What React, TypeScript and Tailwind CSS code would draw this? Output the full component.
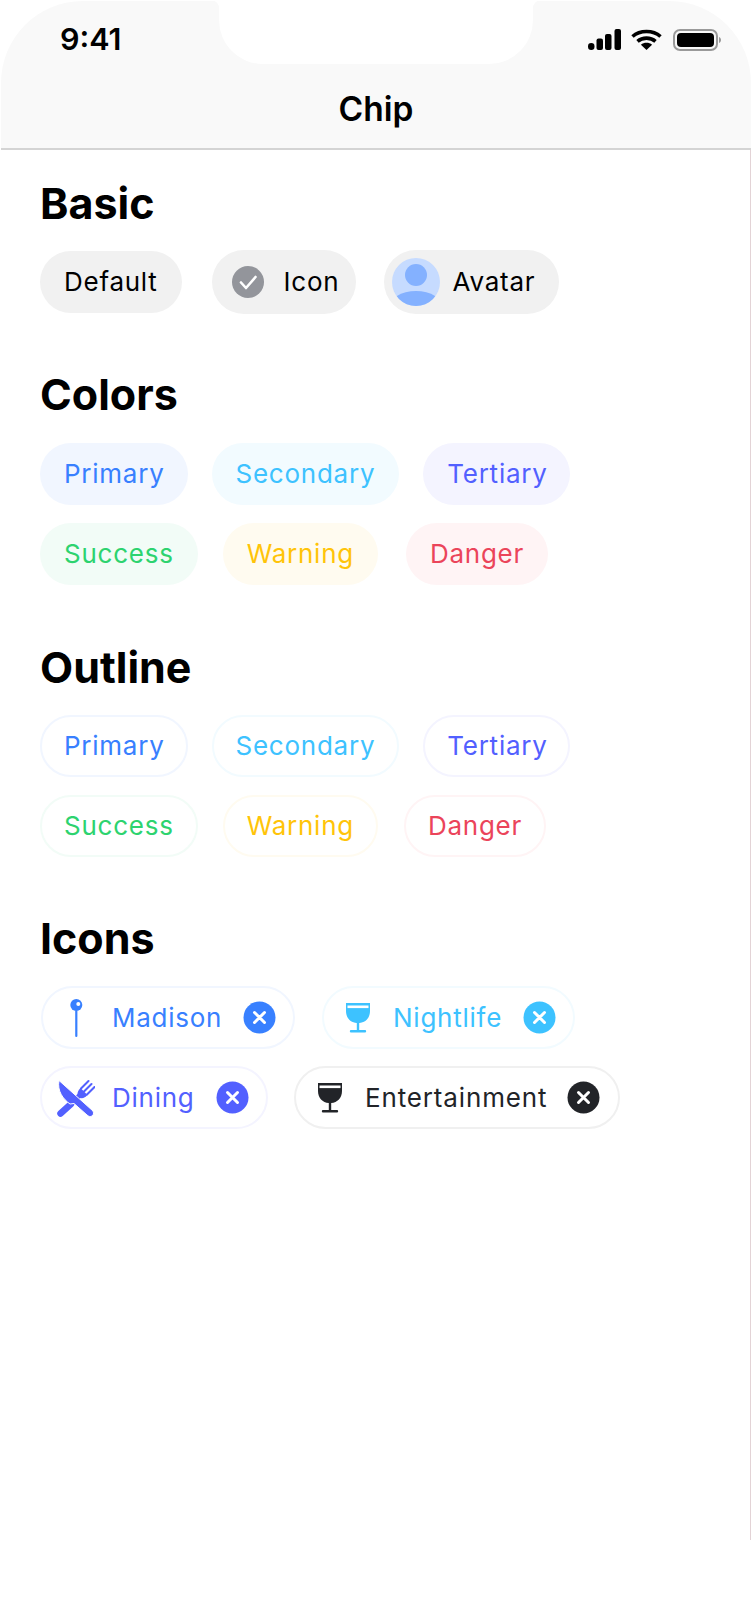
import React from "react";

const Chip = ({ label, cls, ml = "" }: { label: string; cls: string; ml?: string }) => (
  <div className={`flex h-[62px] items-center rounded-full pb-[2px] text-[26px] tracking-[0.75px] ${cls} ${ml}`}>{label}</div>
);

const Close = ({ color }: { color: string }) => (
  <svg width="33" height="33" viewBox="0 0 33 33" className="shrink-0">
    <circle cx="16.5" cy="16.500" r="16" fill={color} />
    <path d="M11.500 11.500l10 10M21.500 11.500l-10 10" stroke="#fff" strokeWidth="3" strokeLinecap="round" />
  </svg>
);

const Glass = ({ color }: { color: string }) => (
  <svg width="26" height="31" viewBox="0 0 26 31" className="shrink-0">
    <path d="M1 1h24v8c0 7-4.500 11.500-10.800 12V28H20a1.200 1.200 0 010 2.400H6A1.200 1.200 0 016 28h5.800v-7C5.500 20.500 1 16 1 9z" fill={color} />
    <rect x="2.500" y="3.500" width="21" height="2.600" fill="#fff" />
  </svg>
);

const Heading = ({ children, cls = "" }: { children: React.ReactNode; cls?: string }) => (
  <h2 className={`h-10 text-[43px] leading-10 font-bold text-black ${cls}`}>{children}</h2>
);

export default function App() {
  return (
    <div className="relative h-[1623px] w-[751px] overflow-hidden bg-white font-['Inter',sans-serif]">
      <div className="absolute top-[83px] right-0 h-[1457px] w-px bg-[#e3d3d6]" />

      <header className="relative mt-px ml-px h-[149px] rounded-tl-[82px] rounded-tr-[82px] border-b-2 border-[#d4d4d4] bg-[#f9f9f9]">
        <div className="absolute top-[-1px] left-[218px] h-[64px] w-[314px] rounded-b-[44px] bg-white" />
        <div className="absolute top-[-1px] left-[209px] size-[9px] bg-[radial-gradient(circle_at_0_100%,transparent_9px,white_9.5px)]" />
        <div className="absolute top-[-1px] left-[532px] size-[9px] bg-[radial-gradient(circle_at_100%_100%,transparent_9px,white_9.5px)]" />

        <span className="absolute top-[20px] left-[59px] text-[30.5px] leading-9 font-semibold text-black">9:41</span>

        <div className="absolute top-[28px] left-[587px] flex items-start">
          <svg width="33" height="21" viewBox="0 0 33 21" className="shrink-0">
            <rect x="0" y="14" width="6.500" height="7" rx="3.250" fill="#000" />
            <rect x="8.500" y="9.500" width="6.500" height="11.500" rx="2" fill="#000" />
            <rect x="17" y="5" width="6.500" height="16" rx="2" fill="#000" />
            <rect x="26.500" y="0" width="6.500" height="21" rx="2" fill="#000" />
          </svg>
          <svg width="31" height="21" viewBox="0 0 31 21" className="ml-[10px] shrink-0">
            <path d="M1.500 7.500C9 .8 22 .8 29.500 7.500" stroke="#000" strokeWidth="3.600" fill="none" />
            <path d="M6.500 12.300c5-4.300 13-4.300 18 0" stroke="#000" strokeWidth="3.600" fill="none" />
            <path d="M15.500 21l-5.600-5.300c3.200-2.600 8-2.600 11.200 0z" fill="#000" />
          </svg>
          <svg width="48" height="22" viewBox="0 0 48 22" className="ml-[11px] shrink-0">
            <rect x="1" y="1" width="43" height="20" rx="6" fill="none" stroke="#9a9a9a" strokeWidth="2" />
            <rect x="4" y="4" width="37" height="14" rx="4" fill="#000" />
            <path d="M46 8c1.400.5 2 1.700 2 3s-.6 2.500-2 3z" fill="#9a9a9a" />
          </svg>
        </div>

        <h1 className="absolute top-[88px] left-0 w-full text-center text-[33.5px] leading-10 font-semibold text-black">Chip</h1>
      </header>

      <main className="pt-[33px] pl-10">
        <Heading>Basic</Heading>
        <div className="mt-[27px] flex h-16 items-center">
          <Chip label="Default" cls="px-6 bg-[#f1f1f1] text-black" />
          <div className="ml-[30px] flex h-16 w-[144px] items-center rounded-full bg-[#f1f1f1] pl-5 text-[26px] tracking-[0.75px] text-black">
            <svg width="32" height="32" viewBox="0 0 32 32" className="shrink-0">
              <circle cx="16" cy="16" r="16" fill="#93959b" />
              <path d="M9 16.500l5 5.500 9.500-11" stroke="#fff" strokeWidth="2.600" fill="none" strokeLinecap="round" strokeLinejoin="round" />
            </svg>
            <span className="ml-5 pb-[2px]">Icon</span>
          </div>
          <div className="ml-7 flex h-16 w-[175px] items-center rounded-full bg-[#f1f1f1] pl-2 text-[26px] tracking-[0.75px] text-black">
            <svg width="48" height="48" viewBox="0 0 48 48" className="shrink-0">
              <defs>
                <clipPath id="av"><circle cx="24" cy="24" r="24" /></clipPath>
              </defs>
              <circle cx="24" cy="24" r="24" fill="#c6dbff" />
              <g clipPath="url(#av)">
                <circle cx="24" cy="17" r="11" fill="#84b1ff" />
                <ellipse cx="24" cy="50" rx="27" ry="17" fill="#84b1ff" />
              </g>
            </svg>
            <span className="ml-[13px] pb-[2px]">Avatar</span>
          </div>
        </div>

        <Heading cls="mt-[60px]">Colors</Heading>
        <div className="mt-[29px] flex gap-6">
          <Chip label="Primary" cls="pr-[23px] pl-6 bg-[#f1f6ff] text-[#3880ff]" />
          <Chip label="Secondary" cls="px-6 bg-[#f2fbff] text-[#3dc2ff]" />
          <Chip label="Tertiary" cls="pr-[22px] pl-6 bg-[#f4f4ff] text-[#5260ff]" />
        </div>
        <div className="mt-[18px] flex">
          <Chip label="Success" cls="px-6 bg-[#f2fcf7] text-[#2dd36f]" />
          <Chip label="Warning" cls="px-6 bg-[#fffbf0] text-[#ffc409]" ml="ml-[25px]" />
          <Chip label="Danger" cls="px-6 bg-[#fff4f5] text-[#eb445a]" ml="ml-7" />
        </div>

        <Heading cls="mt-[62px]">Outline</Heading>
        <div className="mt-[28px] flex gap-6">
          <Chip label="Primary" cls="pr-[21px] pl-[22px] border-2 border-[#f1f6ff] text-[#3880ff]" />
          <Chip label="Secondary" cls="px-[22px] border-2 border-[#f2fbff] text-[#3dc2ff]" />
          <Chip label="Tertiary" cls="pr-5 pl-[22px] border-2 border-[#f4f4ff] text-[#5260ff]" />
        </div>
        <div className="mt-[18px] flex">
          <Chip label="Success" cls="px-[22px] border-2 border-[#f2fcf7] text-[#2dd36f]" />
          <Chip label="Warning" cls="px-[22px] border-2 border-[#fffbf0] text-[#ffc409]" ml="ml-[25px]" />
          <Chip label="Danger" cls="px-[22px] border-2 border-[#fff4f5] text-[#eb445a]" ml="ml-[26px]" />
        </div>

        <Heading cls="mt-[61px]">Icons</Heading>
        <div className="mt-[28px] flex">
          <div className="ml-px flex h-[63px] w-[254px] items-center rounded-full border-2 border-[#f1f6ff] pl-[27px] text-[26px] tracking-[0.75px] text-[#3880ff]">
            <svg width="13" height="38" viewBox="0 0 13 38" className="shrink-0">
              <circle cx="6.300" cy="6" r="6" fill="#3880ff" />
              <circle cx="8.300" cy="5" r="2" fill="#fff" />
              <rect x="5.200" y="11" width="2.200" height="27" rx="1.100" fill="#3880ff" />
            </svg>
            <span className="ml-[29px] flex-1">Madison</span>
            <span className="mr-[17px]"><Close color="#3880ff" /></span>
          </div>
          <div className="ml-[27px] flex h-[63px] w-[253px] items-center rounded-full border-2 border-[#f2fbff] pl-[21px] text-[26px] tracking-[0.75px] text-[#3dc2ff]">
            <Glass color="#3dc2ff" />
            <span className="ml-[22px] flex-1">Nightlife</span>
            <span className="mr-[17px]"><Close color="#3dc2ff" /></span>
          </div>
        </div>
        <div className="mt-[17px] flex">
          <div className="flex h-[63px] w-[228px] items-center rounded-full border-2 border-[#f4f4ff] pl-[15px] text-[26px] tracking-[0.75px] text-[#5260ff]">
            <svg width="38" height="38" viewBox="0 0 38 38" className="shrink-0">
              <path d="M3.500 34.500L14 25" stroke="#5260ff" strokeWidth="6.500" strokeLinecap="round" fill="none" />
              <path d="M14 25l10-10" stroke="#5260ff" strokeWidth="5" fill="none" />
              <path d="M24 9.500L31.500 2M27 12.500L34.500 5M30 15.500L37.500 8" stroke="#5260ff" strokeWidth="2" strokeLinecap="round" fill="none" />
              <path d="M23.500 9L30.500 16C28 19 25 20 22 18.500L20.500 15C20.500 13 21.500 11 23.500 9z" fill="#5260ff" />
              <path d="M2 1.500L36 32c1 2.500.5 4-1 5-1.500 1-3.500.5-5-1L17 24.500 13 25C6 20 0 12 2 1.500z" fill="#5260ff" stroke="#fff" strokeWidth="1" />
            </svg>
            <span className="ml-[17px] flex-1">Dining</span>
            <span className="mr-[17px]"><Close color="#5260ff" /></span>
          </div>
          <div className="ml-[26px] flex h-[63px] w-[326px] items-center rounded-full border-2 border-[#f0f0f0] pl-[21px] text-[26px] tracking-[0.85px] text-[#222428]">
            <Glass color="#222428" />
            <span className="ml-[22px] flex-1">Entertainment</span>
            <span className="mr-[18px]"><Close color="#222428" /></span>
          </div>
        </div>
      </main>
    </div>
  );
}
